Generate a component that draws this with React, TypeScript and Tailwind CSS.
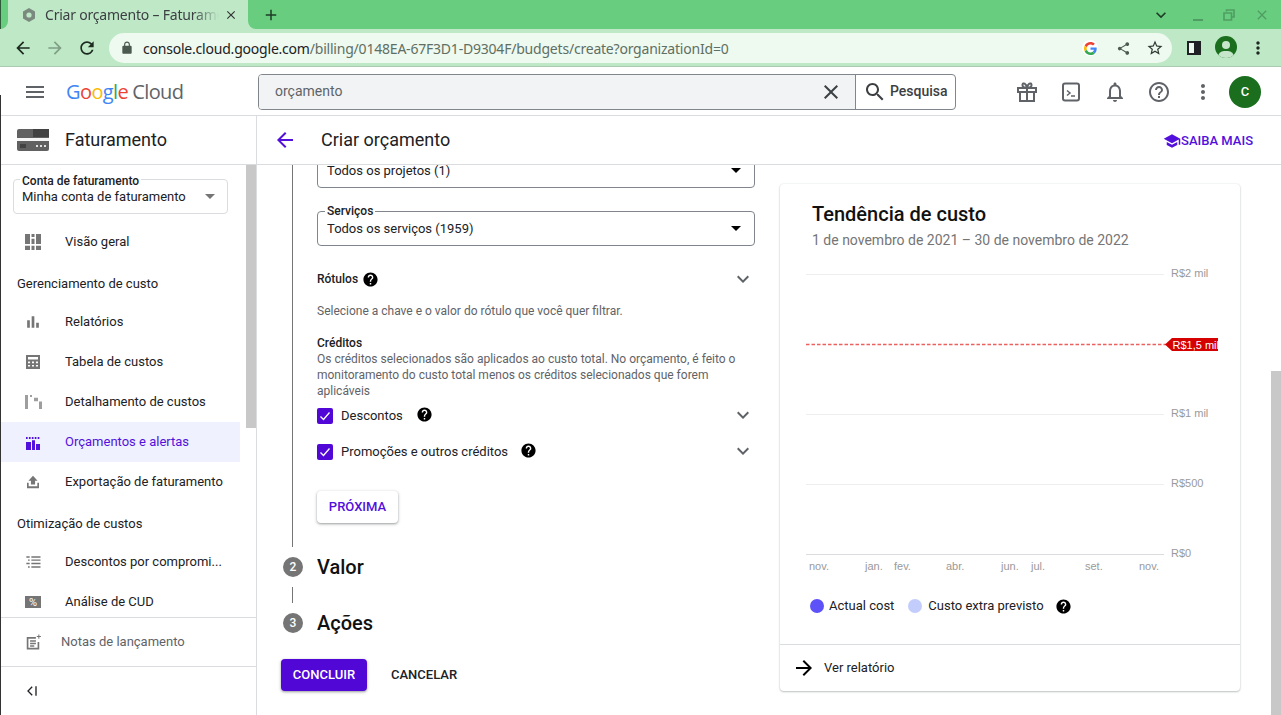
import React from "react";

const P = {
  menu: "M3 18h18v-2H3v2zm0-5h18v-2H3v2zm0-7v2h18V6H3z",
  back: "M20 11H7.83l5.59-5.59L12 4l-8 8 8 8 1.41-1.41L7.83 13H20v-2z",
  forward: "M12 4l-1.41 1.41L16.17 11H4v2h12.17l-5.58 5.59L12 20l8-8z",
  refresh: "M17.65 6.35C16.2 4.9 14.21 4 12 4c-4.42 0-7.99 3.58-7.99 8s3.57 8 7.99 8c3.73 0 6.84-2.55 7.73-6h-2.08c-.82 2.33-3.04 4-5.65 4-3.31 0-6-2.69-6-6s2.69-6 6-6c1.66 0 3.14.69 4.22 1.78L13 11h7V4l-2.35 2.35z",
  help: "M12 2C6.48 2 2 6.48 2 12s4.48 10 10 10 10-4.48 10-10S17.52 2 12 2zm1 17h-2v-2h2v2zm2.07-7.75l-.9.92C13.45 12.9 13 13.5 13 15h-2v-.5c0-1.1.45-2.1 1.17-2.83l1.24-1.26c.37-.36.59-.86.59-1.41 0-1.1-.9-2-2-2s-2 .9-2 2H8c0-2.21 1.79-4 4-4s4 1.79 4 4c0 .88-.36 1.68-.93 2.25z",
  helpO: "M11 18h2v-2h-2v2zm1-16C6.48 2 2 6.48 2 12s4.48 10 10 10 10-4.48 10-10S17.52 2 12 2zm0 18c-4.41 0-8-3.59-8-8s3.59-8 8-8 8 3.59 8 8-3.59 8-8 8zm0-14c-2.21 0-4 1.79-4 4h2c0-1.1.9-2 2-2s2 .9 2 2c0 2-3 1.75-3 5h2c0-2.25 3-2.5 3-5 0-2.21-1.79-4-4-4z",
  bell: "M12 22c1.1 0 2-.9 2-2h-4c0 1.1.9 2 2 2zm6-6v-5c0-3.07-1.63-5.64-4.5-6.32V4c0-.83-.67-1.5-1.5-1.5s-1.5.67-1.5 1.5v.68C7.64 5.36 6 7.92 6 11v5l-2 2v1h16v-1l-2-2zm-2 1H8v-6c0-2.48 1.51-4.5 4-4.5s4 2.02 4 4.5v6z",
  more: "M12 8c1.1 0 2-.9 2-2s-.9-2-2-2-2 .9-2 2 .9 2 2 2zm0 2c-1.1 0-2 .9-2 2s.9 2 2 2 2-.9 2-2-.9-2-2-2zm0 6c-1.1 0-2 .9-2 2s.9 2 2 2 2-.9 2-2-.9-2-2-2z",
  close: "M19 6.41L17.59 5 12 10.59 6.41 5 5 6.41 10.59 12 5 17.59 6.41 19 12 13.41 17.59 19 19 17.59 13.41 12z",
  search: "M15.5 14h-.79l-.28-.27C15.41 12.59 16 11.11 16 9.5 16 5.91 13.09 3 9.5 3S3 5.91 3 9.5 5.91 16 9.5 16c1.61 0 3.09-.59 4.23-1.57l.27.28v.79l5 4.99L20.49 19l-4.99-5zm-6 0C7.01 14 5 11.99 5 9.5S7.01 5 9.5 5 14 7.01 14 9.5 11.99 14 9.5 14z",
  school: "M5 13.18v4L12 21l7-3.82v-4L12 17l-7-3.82zM12 3L1 9l11 6 9-4.91V17h2V9L12 3z",
  star: "M22 9.24l-7.19-.62L12 2 9.19 8.63 2 9.24l5.46 4.73L5.82 21 12 17.27 18.18 21l-1.63-7.03L22 9.24zM12 15.4l-3.76 2.27 1-4.28-3.32-2.88 4.38-.38L12 6.1l1.71 4.04 4.38.38-3.32 2.88 1 4.28L12 15.4z",
  share: "M18 16.08c-.76 0-1.44.3-1.96.77L8.91 12.7c.05-.23.09-.46.09-.7s-.04-.47-.09-.7l7.05-4.11c.54.5 1.25.81 2.04.81 1.66 0 3-1.34 3-3s-1.34-3-3-3-3 1.34-3 3c0 .24.04.47.09.7L8.04 9.81C7.5 9.31 6.79 9 6 9c-1.66 0-3 1.34-3 3s1.34 3 3 3c.79 0 1.5-.31 2.04-.81l7.12 4.16c-.05.21-.08.43-.08.65 0 1.61 1.31 2.92 2.92 2.92 1.61 0 2.92-1.31 2.92-2.92s-1.31-2.92-2.92-2.92z",
  lock: "M18 8h-1V6c0-2.76-2.24-5-5-5S7 3.24 7 6v2H6c-1.1 0-2 .9-2 2v10c0 1.1.9 2 2 2h12c1.1 0 2-.9 2-2V10c0-1.1-.9-2-2-2zM9 6c0-1.66 1.34-3 3-3s3 1.34 3 3v2H9V6z",
  expand: "M16.59 8.59L12 13.17 7.41 8.59 6 10l6 6 6-6z",
  plus: "M19 13h-6v6h-2v-6H5v-2h6V5h2v6h6v2z",
  overview: "M2.4 2.5h6v12h-6zM2.4 16.5h6v5h-6zM10.2 2.5h3.6v3.6h-3.6zM10.2 8h3.6v6.5h-3.6zM10.2 16.5h3.6v5h-3.6zM15.6 2.5h6v12h-6zM15.6 16.5h6v5h-6z",
  bars: "M5 10h3.2v9H5zM10.4 5h3.2v14h-3.2zM15.8 13H19v6h-3.2z",
  calc: "M3.6 3.6h16.8v16.8H3.6zM6 6v3h12V6zM6 11.5v2h2.5v-2zM10.8 11.5v2h2.4v-2zM15.5 11.5v2H18v-2zM6 15.5v2h2.5v-2zM10.8 15.5v2h2.4v-2zM15.5 15.5v2H18v-2z",
  breakdown: "M2.4 3.5h3.6v17H2.4zM8.4 3.5h2.4v2.4H8.4zM13.2 7h4.8v4h-4.8zM19.2 11.5h3.6v9h-3.6z",
  budget: "M3.6 6h2v2.4h-2zM7.1 6h2v2.4h-2zM10.6 6h2v2.4h-2zM14.1 6h2v2.4h-2zM17.6 6h2v2.4h-2zM3.6 12h6v9.6h-6zM10.8 10h3.6v11.6h-3.6zM15.6 14.4h4.8v7.2h-4.8z",
  upload: "M12 4.5 17.5 10.5H14.5V15H9.5V10.5H6.5ZM4.8 13h2v4.2h10.4V13h2v6.4H4.8z",
  list: "M4 5h4v2H4zM10 5h11v2H10zM6 9h2v1.6H6zM10 9h11v1.6H10zM4 13h4v1.6H4zM10 13h11v1.6H10zM6 17h2v2H6zM10 17h11v2H10z",
  notes: "M4.5 6h11v2h-9v11h11v-7h2v9h-15zM8.5 10h7v1.6h-7zM8.5 13h7v1.6h-7zM8.5 16h5v1.6h-5zM18.4 3h1.2v1.9h1.9v1.2h-1.9V8h-1.2V6.1h-1.9V4.9h1.9z",
  collapse: "M13 6.4 11.6 5 4.6 12l7 7 1.4-1.4L7.4 12zM17 5h2v14h-2z",
};

function I({ d, s = 24, c = "text-[#5f6368]" }: { d: string; s?: number; c?: string }) {
  return (
    <svg width={s} height={s} viewBox="0 0 24 24" fill="currentColor" className={`${c} shrink-0`}>
      <path fillRule="evenodd" d={d} />
    </svg>
  );
}

function Caret({ c = "border-t-[#202124]" }: { c?: string }) {
  return <span className={`h-0 w-0 border-x-[5px] border-t-[5px] border-x-transparent ${c}`} />;
}

function NavItem({ icon, label, active, tone }: { icon: string; label: string; active?: boolean; tone?: string }) {
  return (
    <div className={`flex h-10 shrink-0 items-center pl-[23px] ${active ? "bg-[#eff1fe] text-[#5310dc]" : "text-[#202124]"}`}>
      <I d={icon} s={20} c={active ? "text-[#5310dc]" : tone ?? "text-[#757575]"} />
      <span className="ml-[22px] truncate">{label}</span>
    </div>
  );
}

function NavHeading({ children }: { children: React.ReactNode }) {
  return <div className="flex h-10 shrink-0 items-center pl-[17px] pt-1 text-[#202124]">{children}</div>;
}

function Sidebar() {
  return (
    <aside className="flex w-[257px] shrink-0 flex-col border-r border-[#dadce0] text-[13px]">
      <div className="flex h-[49px] shrink-0 items-center border-b border-[#dadce0] pb-[1px] pl-[17px]">
        <svg width="32" height="22" viewBox="0 0 32 22" className="shrink-0">
          <rect width="32" height="22" rx="2" fill="#616161" />
          <rect x="16" width="16" height="8" fill="#424242" />
          <rect y="9" width="32" height="3" fill="#f5f5f5" />
          <rect x="3" y="15" width="6" height="4" fill="#424242" />
          <rect x="19" y="16" width="2" height="2" fill="#e0e0e0" />
          <rect x="23" y="16" width="2" height="2" fill="#e0e0e0" />
          <rect x="27" y="16" width="2" height="2" fill="#e0e0e0" />
        </svg>
        <span className="ml-4 text-[18px] text-[#202124]">Faturamento</span>
      </div>
      <div className="flex min-h-0 flex-1 overflow-hidden">
        <div className="flex w-[240px] shrink-0 flex-col">
          <div className="relative ml-[13px] mt-[14px] mb-[8px] flex h-[35px] w-[215px] shrink-0 items-center justify-between rounded border border-[#dadce0] pl-2 pr-3 text-[#202124]">
            <span className="absolute -top-[6px] left-[6px] bg-white px-[2px] text-[12px] font-medium leading-[14px]">Conta de faturamento</span>
            <span className="mt-[1px]">Minha conta de faturamento</span>
            <Caret c="border-t-[#757575]" />
          </div>
          <NavItem icon={P.overview} label="Visão geral" />
          <NavHeading>Gerenciamento de custo</NavHeading>
          <NavItem icon={P.bars} label="Relatórios" />
          <NavItem icon={P.calc} label="Tabela de custos" />
          <NavItem icon={P.breakdown} label="Detalhamento de custos" tone="text-[#9e9e9e]" />
          <NavItem icon={P.budget} label="Orçamentos e alertas" active />
          <NavItem icon={P.upload} label="Exportação de faturamento" />
          <NavHeading>Otimização de custos</NavHeading>
          <NavItem icon={P.list} label="Descontos por compromi..." />
          <div className="flex h-10 shrink-0 items-center pl-[25px] text-[#202124]">
            <span className="flex h-3 w-4 items-center justify-center bg-[#757575] text-[11px] leading-none text-white">%</span>
            <span className="ml-6">Análise de CUD</span>
          </div>
        </div>
        <div className="ml-[6px] h-[263px] w-[10px] bg-[#c8c8c8]" />
      </div>
      <div className="flex h-[49px] shrink-0 items-center border-t border-[#dadce0] pl-[23px] text-[#5f6368]">
        <I d={P.notes} s={20} c="text-[#757575]" />
        <span className="ml-[18px]">Notas de lançamento</span>
      </div>
      <div className="flex h-[49px] shrink-0 items-center border-t border-[#dadce0] pl-[24px]">
        <I d={P.collapse} s={16} c="text-[#202124]" />
      </div>
    </aside>
  );
}

function Help({ className = "" }: { className?: string }) {
  return (
    <span className={className}>
      <I d={P.help} s={17} c="text-black" />
    </span>
  );
}

function Check({ label, gap }: { label: string; gap: string }) {
  return (
    <div className="flex h-9 items-center text-[13px] text-[#202124]">
      <span className="flex h-4 w-4 items-center justify-center rounded-[2px] bg-[#5107d6]">
        <svg width="12" height="12" viewBox="0 0 12 12" fill="none" stroke="white" strokeWidth="1.3">
          <path d="M1.5 6.5 4.5 9.5 10.5 2.5" />
        </svg>
      </span>
      <span className="ml-2">{label}</span>
      <Help className={`${gap} -mt-[3px]`} />
      <span className="ml-auto -mt-[2px]">
        <I d={P.expand} s={24} c="text-[#5f6368]" />
      </span>
    </div>
  );
}

function Field({ label, value, className = "" }: { label?: string; value: string; className?: string }) {
  return (
    <div className={`relative flex h-[35px] w-[438px] items-center justify-between rounded border border-[#80868b] pl-[9px] pr-[13px] text-[13px] text-[#202124] ${className}`}>
      {label && <span className="absolute -top-[8px] left-[7px] bg-white px-[2px] text-[12px] font-medium leading-[14px]">{label}</span>}
      <span className="mt-[1px]">{value}</span>
      <Caret c="border-t-black" />
    </div>
  );
}

function StepHead({ n, label }: { n: number; label: string }) {
  return (
    <div className="ml-[2px] flex h-5 items-center">
      <span className="flex h-5 w-5 items-center justify-center rounded-full bg-[#757575] text-[12px] font-medium text-white">{n}</span>
      <span className="ml-[14px] text-[20px] font-medium text-[#111]">{label}</span>
    </div>
  );
}

function Form() {
  return (
    <div className="w-[523px] shrink-0 overflow-hidden pl-6">
      <div className="ml-[11px] flex h-[382px] w-[464px] flex-col border-l border-[#757575] pl-6">
        <Field value="Todos os projetos (1)" className="-mt-[12px] shrink-0" />
        <Field label="Serviços" value="Todos os serviços (1959)" className="mt-[23px] shrink-0" />
        <div className="mt-[21px] flex h-[24px] w-[438px] shrink-0 items-center text-[12px] font-medium text-[#202124]">
          Rótulos
          <Help className="ml-[4px]" />
          <span className="ml-auto">
            <I d={P.expand} s={24} c="text-[#5f6368]" />
          </span>
        </div>
        <p className="mt-[12px] shrink-0 text-[12px] leading-4 text-[#5f6368]">Selecione a chave e o valor do rótulo que você quer filtrar.</p>
        <div className="mt-[16px] w-[438px] shrink-0 text-[12px] leading-4 text-[#5f6368]">
          <div className="font-medium text-[#202124]">Créditos</div>
          <p>Os créditos selecionados são aplicados ao custo total. No orçamento, é feito o monitoramento do custo total menos os créditos selecionados que forem aplicáveis</p>
        </div>
        <div className="-mt-px w-[438px] shrink-0">
          <Check label="Descontos" gap="ml-[13px]" />
          <Check label="Promoções e outros créditos" gap="ml-[12px]" />
        </div>
        <button className="mt-[21px] h-8 w-[81px] shrink-0 rounded bg-white text-[13px] font-medium text-[#5310dc] shadow-[0_1px_2px_rgba(60,64,67,0.35),0_1px_3px_1px_rgba(60,64,67,0.15)]">PRÓXIMA</button>
      </div>
      <div className="mt-[10px]">
        <StepHead n={2} label="Valor" />
      </div>
      <div className="ml-[11px] mt-[10px] h-4 w-px bg-[#757575]" />
      <div className="mt-[10px]">
        <StepHead n={3} label="Ações" />
      </div>
      <div className="mt-[26px] flex items-center">
        <button className="h-8 w-[86px] rounded bg-[#5107d6] text-[13px] font-medium text-white shadow-[0_1px_2px_rgba(60,64,67,0.35),0_1px_3px_1px_rgba(60,64,67,0.15)]">CONCLUIR</button>
        <button className="ml-[24px] text-[13px] font-medium text-[#202124]">CANCELAR</button>
      </div>
    </div>
  );
}

function Chart() {
  const lines: [number, string][] = [
    [11, "R$2 mil"],
    [151, "R$1 mil"],
    [221, "R$500"],
    [291, "R$0"],
  ];
  const months: [number, string][] = [
    [3, "nov."], [59, "jan."], [88, "fev."], [140, "abr."], [195, "jun."], [225, "jul."], [279, "set."], [333, "nov."],
  ];
  return (
    <svg width="412" height="314" viewBox="0 0 412 314" className="block" fontFamily="'Liberation Sans', sans-serif" fontSize="11">
      {lines.map(([y, t], i) => (
        <g key={t}>
          <line x1="0" x2="358" y1={y + 0.5} y2={y + 0.5} stroke={i === 3 ? "#dadce0" : "#eeeeee"} />
          <text x="365" y={y + 3} fill="#9a9a9a">{t}</text>
        </g>
      ))}
      <line x1="0" x2="360" y1="81.5" y2="81.5" stroke="#e53935" strokeOpacity="0.8" strokeWidth="1.4" strokeDasharray="3.5 2" />
      <path d="M359 81.5 366 75H412V88H366Z" fill="#d50000" />
      <text x="366.5" y="85.5" fill="#fff">R$1,5 mil</text>
      {months.map(([x, t], i) => (
        <text key={i} x={x} y="307" fill="#9a9a9a">{t}</text>
      ))}
    </svg>
  );
}

function Card() {
  return (
    <section className="mt-[19px] flex h-[507px] w-[460px] shrink-0 flex-col rounded bg-white shadow-[0_1px_2px_rgba(60,64,67,0.3),0_0_2px_rgba(60,64,67,0.12)]">
      <div className="flex-1 pl-[26px]">
        <h2 className="ml-[6px] mt-[16px] text-[20px] font-medium leading-7 text-[#111]">Tendência de custo</h2>
        <p className="ml-[6px] mt-[2px] text-[14px] leading-[20px] text-[#757575]">1 de novembro de 2021 – 30 de novembro de 2022</p>
        <div className="mt-[13px]">
          <Chart />
        </div>
        <div className="mt-[19px] ml-[4px] flex h-[20px] items-center text-[13px] text-[#202124]">
          <span className="h-[14px] w-[14px] rounded-full bg-[#5c52f7]" />
          <span className="ml-[5px]">Actual cost</span>
          <span className="ml-[14px] h-[14px] w-[14px] rounded-full bg-[#c3cdfb]" />
          <span className="ml-[6px]">Custo extra previsto</span>
          <Help className="ml-[11px]" />
        </div>
      </div>
      <div className="flex h-[47px] shrink-0 items-center border-t border-[#dadce0] pl-[12px] text-[13px] text-[#202124]">
        <I d={P.forward} s={24} c="text-black" />
        <span className="ml-[8px]">Ver relatório</span>
      </div>
    </section>
  );
}

function Chrome() {
  return (
    <div className="shrink-0 tracking-[-0.21px]" style={{ fontFamily: "'Noto Sans', sans-serif" }}>
      <div className="flex h-[29px] bg-[#bfe8c7] text-[#3c4043]">
        <div className="w-[8px] rounded-br-lg bg-[#69cd80]" />
        <div className="relative flex w-[240px] shrink-0 items-center pl-[13px]">
          <svg width="16" height="16" viewBox="0 0 16 16" className="shrink-0">
            <path d="M8 1 14 4.5V11.5L8 15 2 11.5V4.5Z" fill="#7b8a7f" />
            <circle cx="8" cy="8" r="2.6" fill="#bfe8c7" />
          </svg>
          <span className="ml-[8px] w-[174px] overflow-hidden whitespace-nowrap text-[14px] [mask-image:linear-gradient(to_right,black_85%,transparent)]">Criar orçamento – Faturamento</span>
          <span className="ml-[5px]">
            <I d={P.close} s={14} c="text-[#333]" />
          </span>
        </div>
        <div className="flex flex-1 items-center rounded-bl-lg bg-[#69cd80] pl-[14px] pr-[11px]">
          <I d={P.plus} s={18} c="text-[#1d3b25]" />
          <span className="ml-auto">
            <I d={P.expand} s={20} c="text-[#1d3b25]" />
          </span>
          <span className="ml-[22px]"><span className="block h-[2px] w-[10px] translate-y-[5px] bg-[#4f9d62]" /></span>
          <svg width="12" height="12" viewBox="0 0 12 12" fill="none" stroke="#4f9d62" strokeWidth="1.6" className="ml-[20px] shrink-0">
            <path d="M3.5 2.5V1H11V8H8.5M1 4H8.5V11H1Z" />
          </svg>
          <span className="ml-[19px]"><I d={P.close} s={16} c="text-[#4f9d62]" /></span>
        </div>
      </div>
      <div className="flex h-[38px] items-start border-b border-[#a9c9b0] bg-[#bfe8c7] pt-[4px] text-[#202124]">
        <span className="ml-[13px] mt-[5px]"><I d={P.back} s={20} c="text-[#1d2a20]" /></span>
        <span className="ml-[12px] mt-[5px]"><I d={P.forward} s={20} c="text-[#7f9f87]" /></span>
        <span className="ml-[12px] mt-[5px]"><I d={P.refresh} s={20} c="text-[#1d2a20]" /></span>
        <div className="ml-[12px] flex h-[30px] w-[1063px] items-center rounded-full bg-[#eef9f0] pl-[11px] pr-[8px] text-[14px]">
          <I d={P.lock} s={14} c="text-[#4a5a4e]" />
          <span className="ml-[9px] whitespace-nowrap">
            console.cloud.google.com<span className="text-[#5f6f63]">/billing/0148EA-67F3D1-D9304F/budgets/create?organizationId=0</span>
          </span>
          <span className="ml-auto flex h-[16px] w-[16px] shrink-0 items-center justify-center rounded-full bg-white">
            <svg width="13" height="13" viewBox="0 0 48 48">
              <path fill="#EA4335" d="M24 9.5c3.54 0 6.71 1.22 9.21 3.6l6.85-6.85C35.9 2.38 30.47 0 24 0 14.62 0 6.51 5.38 2.56 13.22l7.98 6.19C12.43 13.72 17.74 9.5 24 9.5z" />
              <path fill="#4285F4" d="M46.98 24.55c0-1.57-.15-3.09-.38-4.55H24v9.02h12.94c-.58 2.96-2.26 5.48-4.78 7.18l7.73 6c4.51-4.18 7.09-10.36 7.09-17.65z" />
              <path fill="#FBBC05" d="M10.53 28.59c-.48-1.45-.76-2.99-.76-4.59s.27-3.14.76-4.59l-7.98-6.19C.92 16.46 0 20.12 0 24c0 3.88.92 7.54 2.56 10.78l7.97-6.19z" />
              <path fill="#34A853" d="M24 48c6.48 0 11.93-2.13 15.89-5.81l-7.73-6c-2.15 1.45-4.92 2.3-8.16 2.3-6.26 0-11.57-4.22-13.47-9.91l-7.98 6.19C6.51 42.62 14.62 48 24 48z" />
            </svg>
          </span>
          <span className="ml-[18px]"><I d={P.share} s={15} c="text-[#4a5a4e]" /></span>
          <span className="ml-[15px]"><I d={P.star} s={18} c="text-[#2f3a32]" /></span>
        </div>
        <span className="ml-[15px] mt-[8px] block h-[14px] w-[14px] border-[2px] border-r-[7px] border-[#202124] bg-[#eef9f0]" />
        <span className="relative ml-[14px] mt-[3px] block h-[22px] w-[22px] overflow-hidden rounded-full bg-[#1a6e1d]">
          <span className="absolute left-[7px] top-[5px] h-[8px] w-[8px] rounded-full bg-[#c6e6cb]" />
          <span className="absolute left-[3px] top-[15px] h-[12px] w-[16px] rounded-full bg-[#c6e6cb]" />
        </span>
        <span className="ml-[11px] mt-[5px]"><I d={P.more} s={20} c="text-[#1d2a20]" /></span>
      </div>
    </div>
  );
}

function Header() {
  return (
    <header className="flex h-[49px] shrink-0 items-center border-b border-[#dadce0] bg-white pt-[1px]">
      <span className="ml-[23px]"><I d={P.menu} s={24} c="text-[#5f6368]" /></span>
      <span className="ml-[19px] w-[117px] whitespace-nowrap text-[20px] tracking-[-0.6px]" style={{ fontFamily: "'Open Sans', sans-serif" }}>
        <span className="text-[#4285f4]">G</span>
        <span className="text-[#ea4335]">o</span>
        <span className="text-[#fbbc05]">o</span>
        <span className="text-[#4285f4]">g</span>
        <span className="text-[#34a853]">l</span>
        <span className="text-[#ea4335]">e</span>
        <span className="ml-[4px] text-[#5f6368]">Cloud</span>
      </span>
      <div className="ml-[75px] flex h-[36px] w-[698px] overflow-hidden rounded border border-[#80868b]">
        <div className="flex w-[597px] items-center justify-between border-r border-[#80868b] bg-[#f1f3f4] pl-4 pr-[12px] text-[14px] text-[#5f6368]">
          orçamento
          <I d={P.close} s={24} c="text-[#3c4043]" />
        </div>
        <div className="flex flex-1 items-center pl-[7px] text-[14px] font-medium text-[#3c4043]">
          <I d={P.search} s={24} c="text-[#3c4043]" />
          <span className="ml-[3px]">Pesquisa</span>
        </div>
      </div>
      <div className="ml-[59px] flex items-center gap-[20px]">
        <svg width="24" height="24" viewBox="0 0 24 24" fill="none" stroke="#5f6368" strokeWidth="2" className="shrink-0">
          <path d="M3 8h18v4H3zM5 12v9h14v-9M12 8v13M12 8C9 8 7 6.5 7.5 4.5 8.2 2.5 11 3 12 8c1-5 3.8-5.5 4.5-3.5C17 6.5 15 8 12 8Z" />
        </svg>
        <svg width="24" height="24" viewBox="0 0 24 24" fill="none" stroke="#5f6368" strokeWidth="2" className="shrink-0">
          <rect x="4" y="3.5" width="16" height="17" rx="2" />
          <path d="M8 10.5l3 2.5-3 2.5M12 16h4" strokeWidth="1.5" />
        </svg>
        <I d={P.bell} s={24} />
        <I d={P.helpO} s={24} />
        <I d={P.more} s={24} />
      </div>
      <span className="ml-[14px] flex h-8 w-8 items-center justify-center rounded-full bg-[#1a6e1d] text-[13px] font-medium text-white">C</span>
    </header>
  );
}

export default function App() {
  return (
    <div className="relative flex h-[715px] w-[1281px] flex-col overflow-hidden bg-white" style={{ fontFamily: "Roboto, sans-serif" }}>
      <Chrome />
      <Header />
      <div className="flex min-h-0 flex-1">
        <Sidebar />
        <main className="flex min-w-0 flex-1 flex-col">
          <div className="flex h-[49px] shrink-0 items-center border-b border-[#dadce0] pb-[1px] pl-[16px] pr-[28px]">
            <I d={P.back} s={24} c="text-[#5310dc]" />
            <h1 className="ml-[24px] text-[18px] text-[#202124]">Criar orçamento</h1>
            <div className="ml-auto flex items-center pt-[2px] text-[13px] font-medium text-[#5310dc]">
              <I d={P.school} s={18} c="text-[#5310dc]" />
              <span>SAIBA MAIS</span>
            </div>
          </div>
          <div className="flex min-h-0 flex-1">
            <Form />
            <Card />
            <div className="ml-auto mt-[206px] h-[344px] w-[10px] bg-[#c8c8c8]" />
          </div>
        </main>
      </div>
      <div className="absolute bottom-0 left-0 top-[95px] w-px bg-[#333]" />
      <div className="absolute left-0 top-0 h-[29px] w-px bg-[#2f5a3a]" />
    </div>
  );
}
